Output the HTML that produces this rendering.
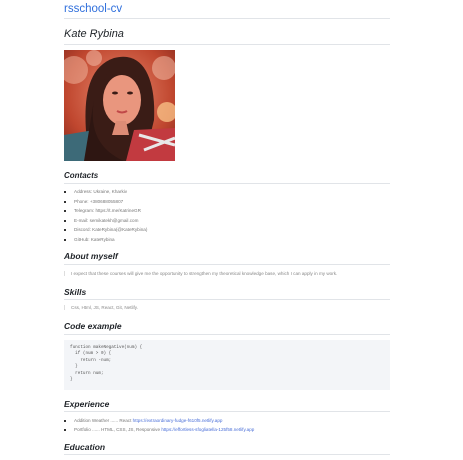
<!DOCTYPE html>
<html><head><meta charset="utf-8"><style>
*{margin:0;padding:0;box-sizing:border-box}
body{width:463px;height:460px;overflow:hidden;background:#fff;font-family:"Liberation Sans",sans-serif;color:#24292e;position:relative}
.a{position:absolute;left:64px;white-space:nowrap}
.h{font-style:italic;font-weight:bold;color:#1f2328}
.ln{position:absolute;left:64px;width:326px;height:1px;background:#e1e4e8}
.li{font-size:4.6px;color:#777}
.li:before{content:"";position:absolute;left:-0px;top:2px;width:2px;height:2px;background:#333}
.li span{margin-left:10px}
.q{border-left:1px solid #ddd;padding-left:6px;font-size:4.6px;color:#888}
.code{position:absolute;left:64px;top:340px;width:326px;height:50px;background:#f3f5f8;font-family:"Liberation Mono",monospace;font-size:4.3px;color:#555;padding:5px 6px;line-height:6.4px;white-space:pre}
a{color:#4a6fd8;text-decoration:none}
</style></head><body>
<div class="a" style="top:3px;font-size:11.5px;color:#2f6fdc">rsschool-cv</div>
<div class="ln" style="top:18px"></div>
<div class="a h" style="top:28px;font-size:11px;font-weight:normal;font-style:italic">Kate Rybina</div>
<div class="ln" style="top:44px"></div>
<svg style="position:absolute;left:64px;top:50px" width="111" height="111" viewBox="0 0 111 111">
<defs><radialGradient id="bg" cx="0.5" cy="0.4" r="0.8"><stop offset="0" stop-color="#e88a70"/><stop offset="0.6" stop-color="#c0472f"/><stop offset="1" stop-color="#7a2218"/></radialGradient></defs>
<rect width="111" height="111" fill="url(#bg)"/>
<circle cx="10" cy="20" r="14" fill="#f4b9a2" opacity=".5"/><circle cx="100" cy="18" r="12" fill="#f6c6b0" opacity=".5"/>
<circle cx="103" cy="62" r="10" fill="#ffcf90" opacity=".7"/><circle cx="30" cy="8" r="8" fill="#f7c4b0" opacity=".5"/>
<path d="M25 111 C20 70 15 20 50 8 C80 0 92 30 90 70 L80 111Z" fill="#3a1c16"/>
<ellipse cx="58" cy="50" rx="19" ry="25" fill="#e9967e"/>
<path d="M40 30 C45 12 70 10 76 30 C70 20 50 20 40 30Z" fill="#3a1c16"/>
<path d="M52 71 L62 71 L65 85 L48 85Z" fill="#dd8c76"/>
<path d="M0 85 L30 80 L40 111 L0 111Z" fill="#3d6a78"/>
<path d="M70 80 L111 78 L111 111 L62 111Z" fill="#c23a40"/>
<path d="M75 85 L111 95 M80 100 L111 88" stroke="#e8e8e8" stroke-width="3"/>
<path d="M30 50 C25 80 35 100 60 111 L20 111Z" fill="#2e1612"/>
<ellipse cx="51" cy="43" rx="3" ry="1.5" fill="#3a1c16"/><ellipse cx="66" cy="43" rx="3" ry="1.5" fill="#3a1c16"/>
<path d="M53 61 Q58 64 63 61" stroke="#c04848" stroke-width="2" fill="none"/>
</svg>
<div class="a h" style="top:171px;font-size:8px">Contacts</div>
<div class="ln" style="top:183px"></div>
<div class="a li" style="top:189px"><span>Address: Ukraine, Kharkiv</span></div>
<div class="a li" style="top:199px"><span>Phone: +380688055807</span></div>
<div class="a li" style="top:208px"><span>Telegram: https://t.me/KatrineGR</span></div>
<div class="a li" style="top:218px"><span>E-mail: semikatekh@gmail.com</span></div>
<div class="a li" style="top:227px"><span>Discord: KateRybina(@KateRybina)</span></div>
<div class="a li" style="top:237px"><span>GitHub: KateRybina</span></div>
<div class="a h" style="top:251px;font-size:8.5px">About myself</div>
<div class="ln" style="top:264px"></div>
<div class="a q" style="top:271px">I expect that these courses will give me the opportunity to strengthen my theoretical knowledge base, which I can apply in my work.</div>
<div class="a h" style="top:287px;font-size:8.5px">Skills</div>
<div class="ln" style="top:299px"></div>
<div class="a q" style="top:305px">Css, Html, JS, React, Git, Netlify.</div>
<div class="a h" style="top:321px;font-size:8.5px">Code example</div>
<div class="ln" style="top:334px"></div>
<div class="code">function makeNegative(num) {
  if (num > 0) {
    return -num;
  }
  return num;
}</div>
<div class="a h" style="top:399px;font-size:8.5px">Experience</div>
<div class="ln" style="top:411px"></div>
<div class="a li" style="top:418px"><span>Addition Weather ...... React <a>https://extraordinary-fudge-f610f5.netlify.app</a></span></div>
<div class="a li" style="top:427px"><span>Portfolio ...... HTML, CSS, JS, Responsive <a>https://effortless-sfogliatella-125f58.netlify.app</a></span></div>
<div class="a h" style="top:442px;font-size:8.5px">Education</div>
<div class="ln" style="top:454px"></div>
</body></html>
